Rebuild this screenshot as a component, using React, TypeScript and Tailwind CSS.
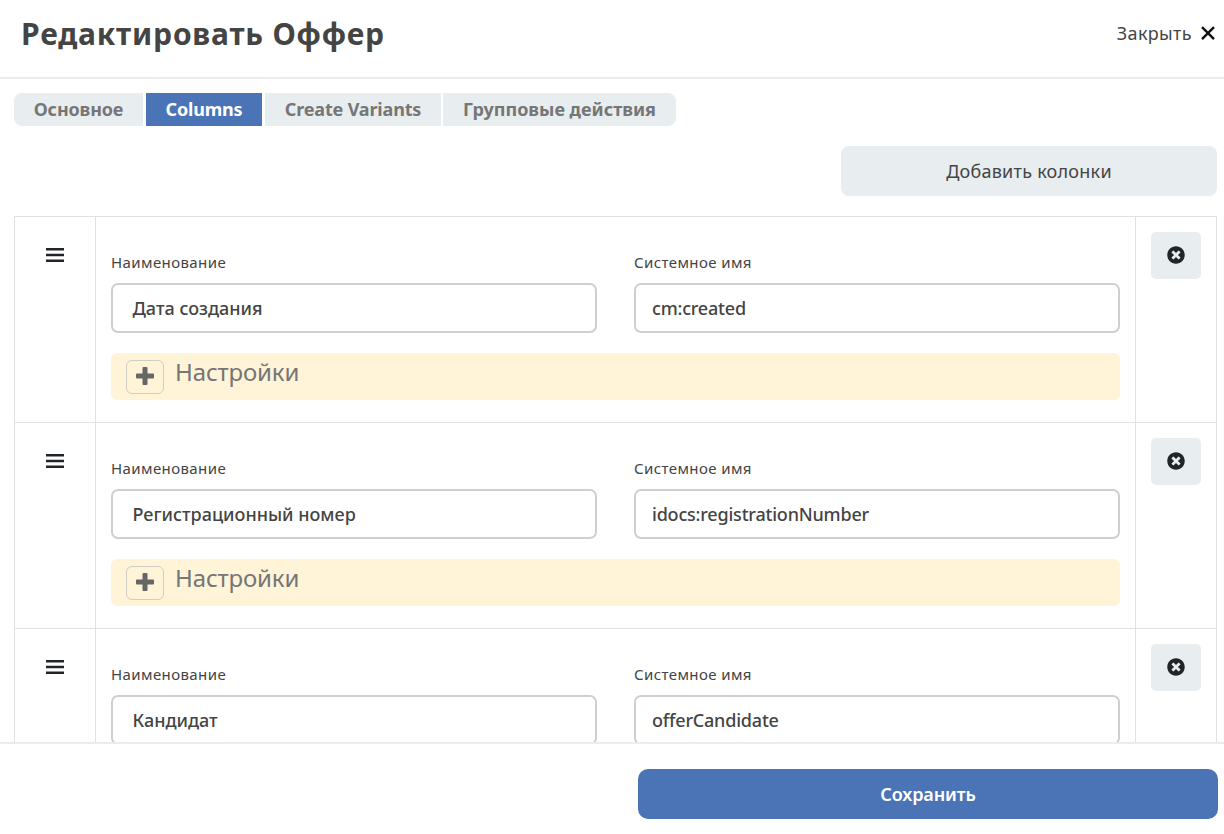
import React from "react";
import { FaTimesCircle } from "react-icons/fa";

const tabs = [
  { label: "Основное", cls: "w-[129px] mr-[3px] rounded-l-lg bg-[#e8edef] text-[#767676] tracking-[-0.15px]" },
  { label: "Columns", cls: "w-[116px] mr-[3px] bg-[#4b74b7] text-white tracking-[-0.2px]" },
  { label: "Create Variants", cls: "w-[176px] mr-[2px] bg-[#e8edef] text-[#767676] tracking-[-0.17px]" },
  { label: "Групповые действия", cls: "w-[233px] rounded-r-lg bg-[#e8edef] text-[#767676]" },
];

const rows = [
  { title: "Дата создания", name: "cm:created" },
  { title: "Регистрационный номер", name: "idocs:registrationNumber" },
  { title: "Кандидат", name: "offerCandidate" },
];

function Field({ label, value, pad }: { label: string; value: string; pad: string }) {
  return (
    <div className="w-[486px]">
      <div className="h-5 text-[15px] font-normal leading-5 tracking-[0.4px]">
        <span>{label}</span>
      </div>
      <div className={`mt-[11px] flex h-[50px] items-center rounded-[7px] border-2 border-[#cfcfcf] bg-white text-lg ${pad}`}>
        <span>{value}</span>
      </div>
    </div>
  );
}

function Row({ title, name }: { title: string; name: string }) {
  return (
    <div className="flex h-[206px] shrink-0 border-t border-[#dee2e6]">
      <div className="flex w-[82px] justify-center border-x border-[#dee2e6] pt-[30px]">
        <svg width="18" height="16" viewBox="0 0 18 16" fill="#212529">
          <path d="M0 .9h18v2.5H0zM0 6.7h18v2.5H0zM0 12.5h18v2.5H0z" />
        </svg>
      </div>
      <div className="w-[1039px] pl-[15px] pr-[15px] pt-[35px]">
        <div className="flex justify-between">
          <Field label="Наименование" value={title} pad="pl-[19.5px]" />
          <Field label="Системное имя" value={name} pad="pl-4 tracking-[-0.2px]" />
        </div>
        <div className="mt-5 flex h-[47px] rounded-md bg-[#fff4d8] pl-[15px] pt-[7px]">
          <div className="flex h-[34px] w-[38px] items-center justify-center rounded-md border border-[#cfcdc4]">
            <svg width="18" height="18" viewBox="0 0 18 18" fill="#666666" className="-mt-[2px]">
              <path d="M7.5 0h3q1 0 1 1v5.5H17q1 0 1 1v3q0 1-1 1h-5.5V17q0 1-1 1h-3q-1 0-1-1v-5.5H1q-1 0-1-1v-3q0-1 1-1h5.5V1q0-1 1-1z" />
            </svg>
          </div>
          <div className="-mt-[3px] ml-[11px] text-2xl font-normal leading-[30px] tracking-[-0.15px] text-[#767676]">Настройки</div>
        </div>
      </div>
      <div className="flex w-[82px] justify-center border-x border-[#dee2e6] pt-[15px]">
        <button className="flex h-[47px] w-[50px] items-center justify-center rounded-[5px] bg-[#e8edef] pb-[1px]">
          <FaTimesCircle size={18} color="#212529" />
        </button>
      </div>
    </div>
  );
}

export default function App() {
  return (
    <div className="flex h-[834px] w-[1224px] flex-col overflow-hidden bg-white font-['Noto_Sans',sans-serif] font-medium text-[#444444]">
      <header className="flex h-[79px] shrink-0 justify-between border-b-2 border-[#e8edef] pl-[21px] pr-2">
        <h1 className="pt-[13px] text-[30px] font-bold leading-[42px] tracking-[0.8px]">Редактировать Оффер</h1>
        <button className="mt-5 flex h-[26px] items-center gap-2 text-lg">
          <span className="font-normal tracking-[0.35px]">Закрыть</span>
          <svg width="16" height="16" viewBox="0 0 16 16" stroke="#111111" strokeWidth="2.4">
            <path d="M2 2.2 14 14.2M14 2.2 2 14.2" />
          </svg>
        </button>
      </header>
      <main className="flex h-[663px] shrink-0 flex-col overflow-hidden pl-[14px] pr-[7px] pt-[14px]">
        <nav className="flex h-[33px] shrink-0 text-lg font-bold leading-[33px]">
          {tabs.map((t) => (
            <button key={t.label} className={`whitespace-nowrap text-center ${t.cls}`}>
              <span>{t.label}</span>
            </button>
          ))}
        </nav>
        <button className="mt-5 h-[50px] w-[376px] shrink-0 self-end rounded-lg bg-[#e8edef] text-lg font-normal tracking-[0.25px]">
          <span>Добавить колонки</span>
        </button>
        <div className="mt-5 flex flex-col">
          {rows.map((r) => (
            <Row key={r.name} title={r.title} name={r.name} />
          ))}
        </div>
      </main>
      <footer className="flex h-[92px] shrink-0 justify-end border-t-2 border-[#e8edef] pr-[6px] pt-[25px]">
        <button className="h-[50px] w-[580px] rounded-[10px] bg-[#4b74b7] text-lg font-semibold tracking-[-0.1px] text-white">
          <span>Сохранить</span>
        </button>
      </footer>
    </div>
  );
}
